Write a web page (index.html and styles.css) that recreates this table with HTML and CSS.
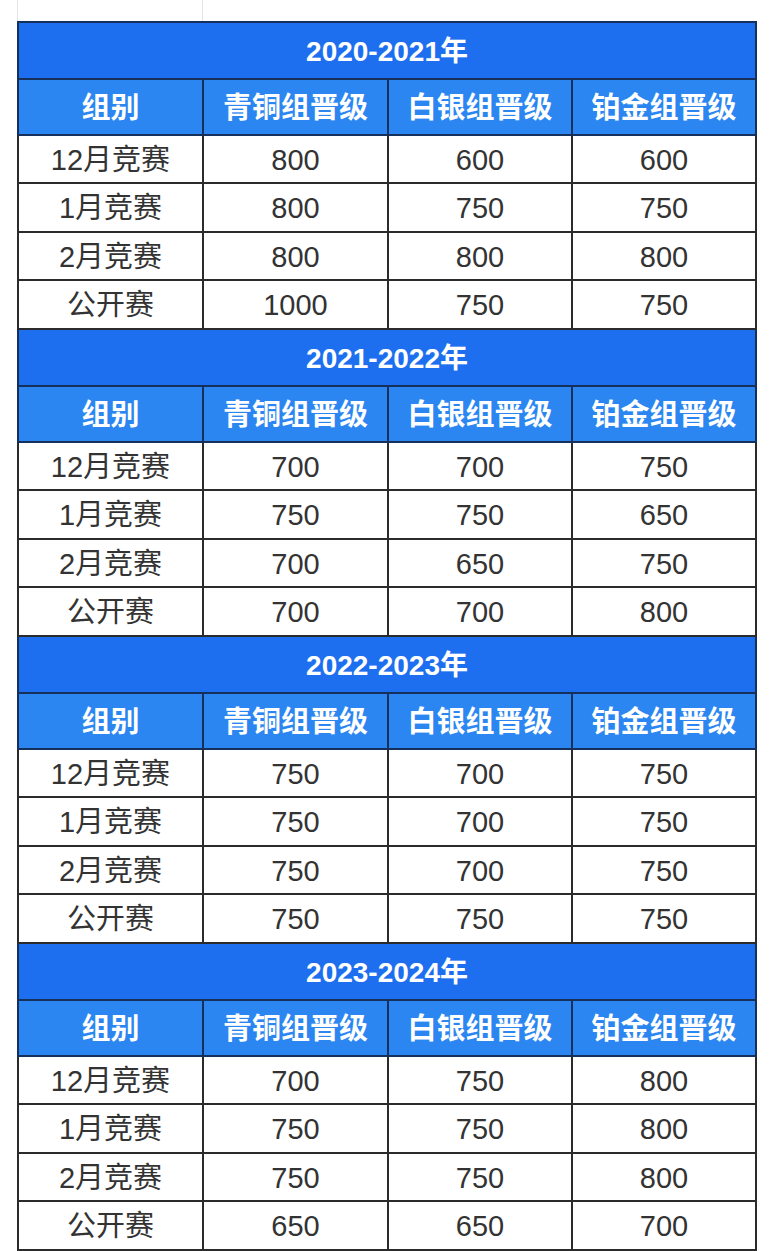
FILE: index.html
```html
<!DOCTYPE html>
<html lang="zh">
<head>
<meta charset="utf-8">
<link rel="stylesheet" href="styles.css">
</head>
<body>
<div class="page">
<table class="scores">
<colgroup><col class="c1"><col class="c2"><col class="c3"><col class="c4"></colgroup>
<tbody>
<tr class="title"><td colspan="4">2020-2021年</td></tr>
<tr class="head"><td>组别</td><td>青铜组晋级</td><td>白银组晋级</td><td>铂金组晋级</td></tr>
<tr class="r48"><td>12月竞赛</td><td>800</td><td>600</td><td>600</td></tr>
<tr class="r49"><td>1月竞赛</td><td>800</td><td>750</td><td>750</td></tr>
<tr class="r48"><td>2月竞赛</td><td>800</td><td>800</td><td>800</td></tr>
<tr class="r49"><td>公开赛</td><td>1000</td><td>750</td><td>750</td></tr>

<tr class="title"><td colspan="4">2021-2022年</td></tr>
<tr class="head"><td>组别</td><td>青铜组晋级</td><td>白银组晋级</td><td>铂金组晋级</td></tr>
<tr class="r48"><td>12月竞赛</td><td>700</td><td>700</td><td>750</td></tr>
<tr class="r49"><td>1月竞赛</td><td>750</td><td>750</td><td>650</td></tr>
<tr class="r48"><td>2月竞赛</td><td>700</td><td>650</td><td>750</td></tr>
<tr class="r49"><td>公开赛</td><td>700</td><td>700</td><td>800</td></tr>

<tr class="title"><td colspan="4">2022-2023年</td></tr>
<tr class="head"><td>组别</td><td>青铜组晋级</td><td>白银组晋级</td><td>铂金组晋级</td></tr>
<tr class="r48"><td>12月竞赛</td><td>750</td><td>700</td><td>750</td></tr>
<tr class="r49"><td>1月竞赛</td><td>750</td><td>700</td><td>750</td></tr>
<tr class="r48"><td>2月竞赛</td><td>750</td><td>700</td><td>750</td></tr>
<tr class="r49"><td>公开赛</td><td>750</td><td>750</td><td>750</td></tr>

<tr class="title"><td colspan="4">2023-2024年</td></tr>
<tr class="head"><td>组别</td><td>青铜组晋级</td><td>白银组晋级</td><td>铂金组晋级</td></tr>
<tr class="r48"><td>12月竞赛</td><td>700</td><td>750</td><td>800</td></tr>
<tr class="r49"><td>1月竞赛</td><td>750</td><td>750</td><td>800</td></tr>
<tr class="r48"><td>2月竞赛</td><td>750</td><td>750</td><td>800</td></tr>
<tr class="r49"><td>公开赛</td><td>650</td><td>650</td><td>700</td></tr>
</tbody>
</table>
</div>
</body>
</html>
```

FILE: styles.css
```css
html, body {
  margin: 0;
  padding: 0;
  background: #ffffff;
}
.page {
  width: 770px;
  height: 1251px;
  padding: 21px 0 0 17px;
  box-sizing: border-box;
  background-image:
    linear-gradient(#e4e4e4, #e4e4e4),
    linear-gradient(#e4e4e4, #e4e4e4);
  background-size: 1px 21px, 1px 21px;
  background-position: 17px 0, 202px 0;
  background-repeat: no-repeat;
}
.scores {
  border-collapse: collapse;
  table-layout: fixed;
  width: 738px;
  font-family: "Liberation Sans", "Noto Sans CJK SC", sans-serif;
  font-size: 29px;
  color: #333333;
}
.c1 { width: 185px; }
.c2 { width: 185px; }
.c3 { width: 184px; }
.c4 { width: 184px; }
.scores td {
  border: 2px solid #2b2b2b;
  text-align: center;
  vertical-align: middle;
  padding: 2px 0 0 0;
  line-height: 1;
  white-space: nowrap;
}
.title td {
  background: #1e6ff0;
  color: #ffffff;
  height: 53px;
  font-size: 28px;
  font-weight: bold;
  border-color: #16305c;
}
.head td {
  background: #2c86f1;
  color: #ffffff;
  font-weight: bold;
  height: 52px;
  border-color: #16305c;
}
.r48 td { height: 44px; }
.r49 td { height: 45px; }
```
